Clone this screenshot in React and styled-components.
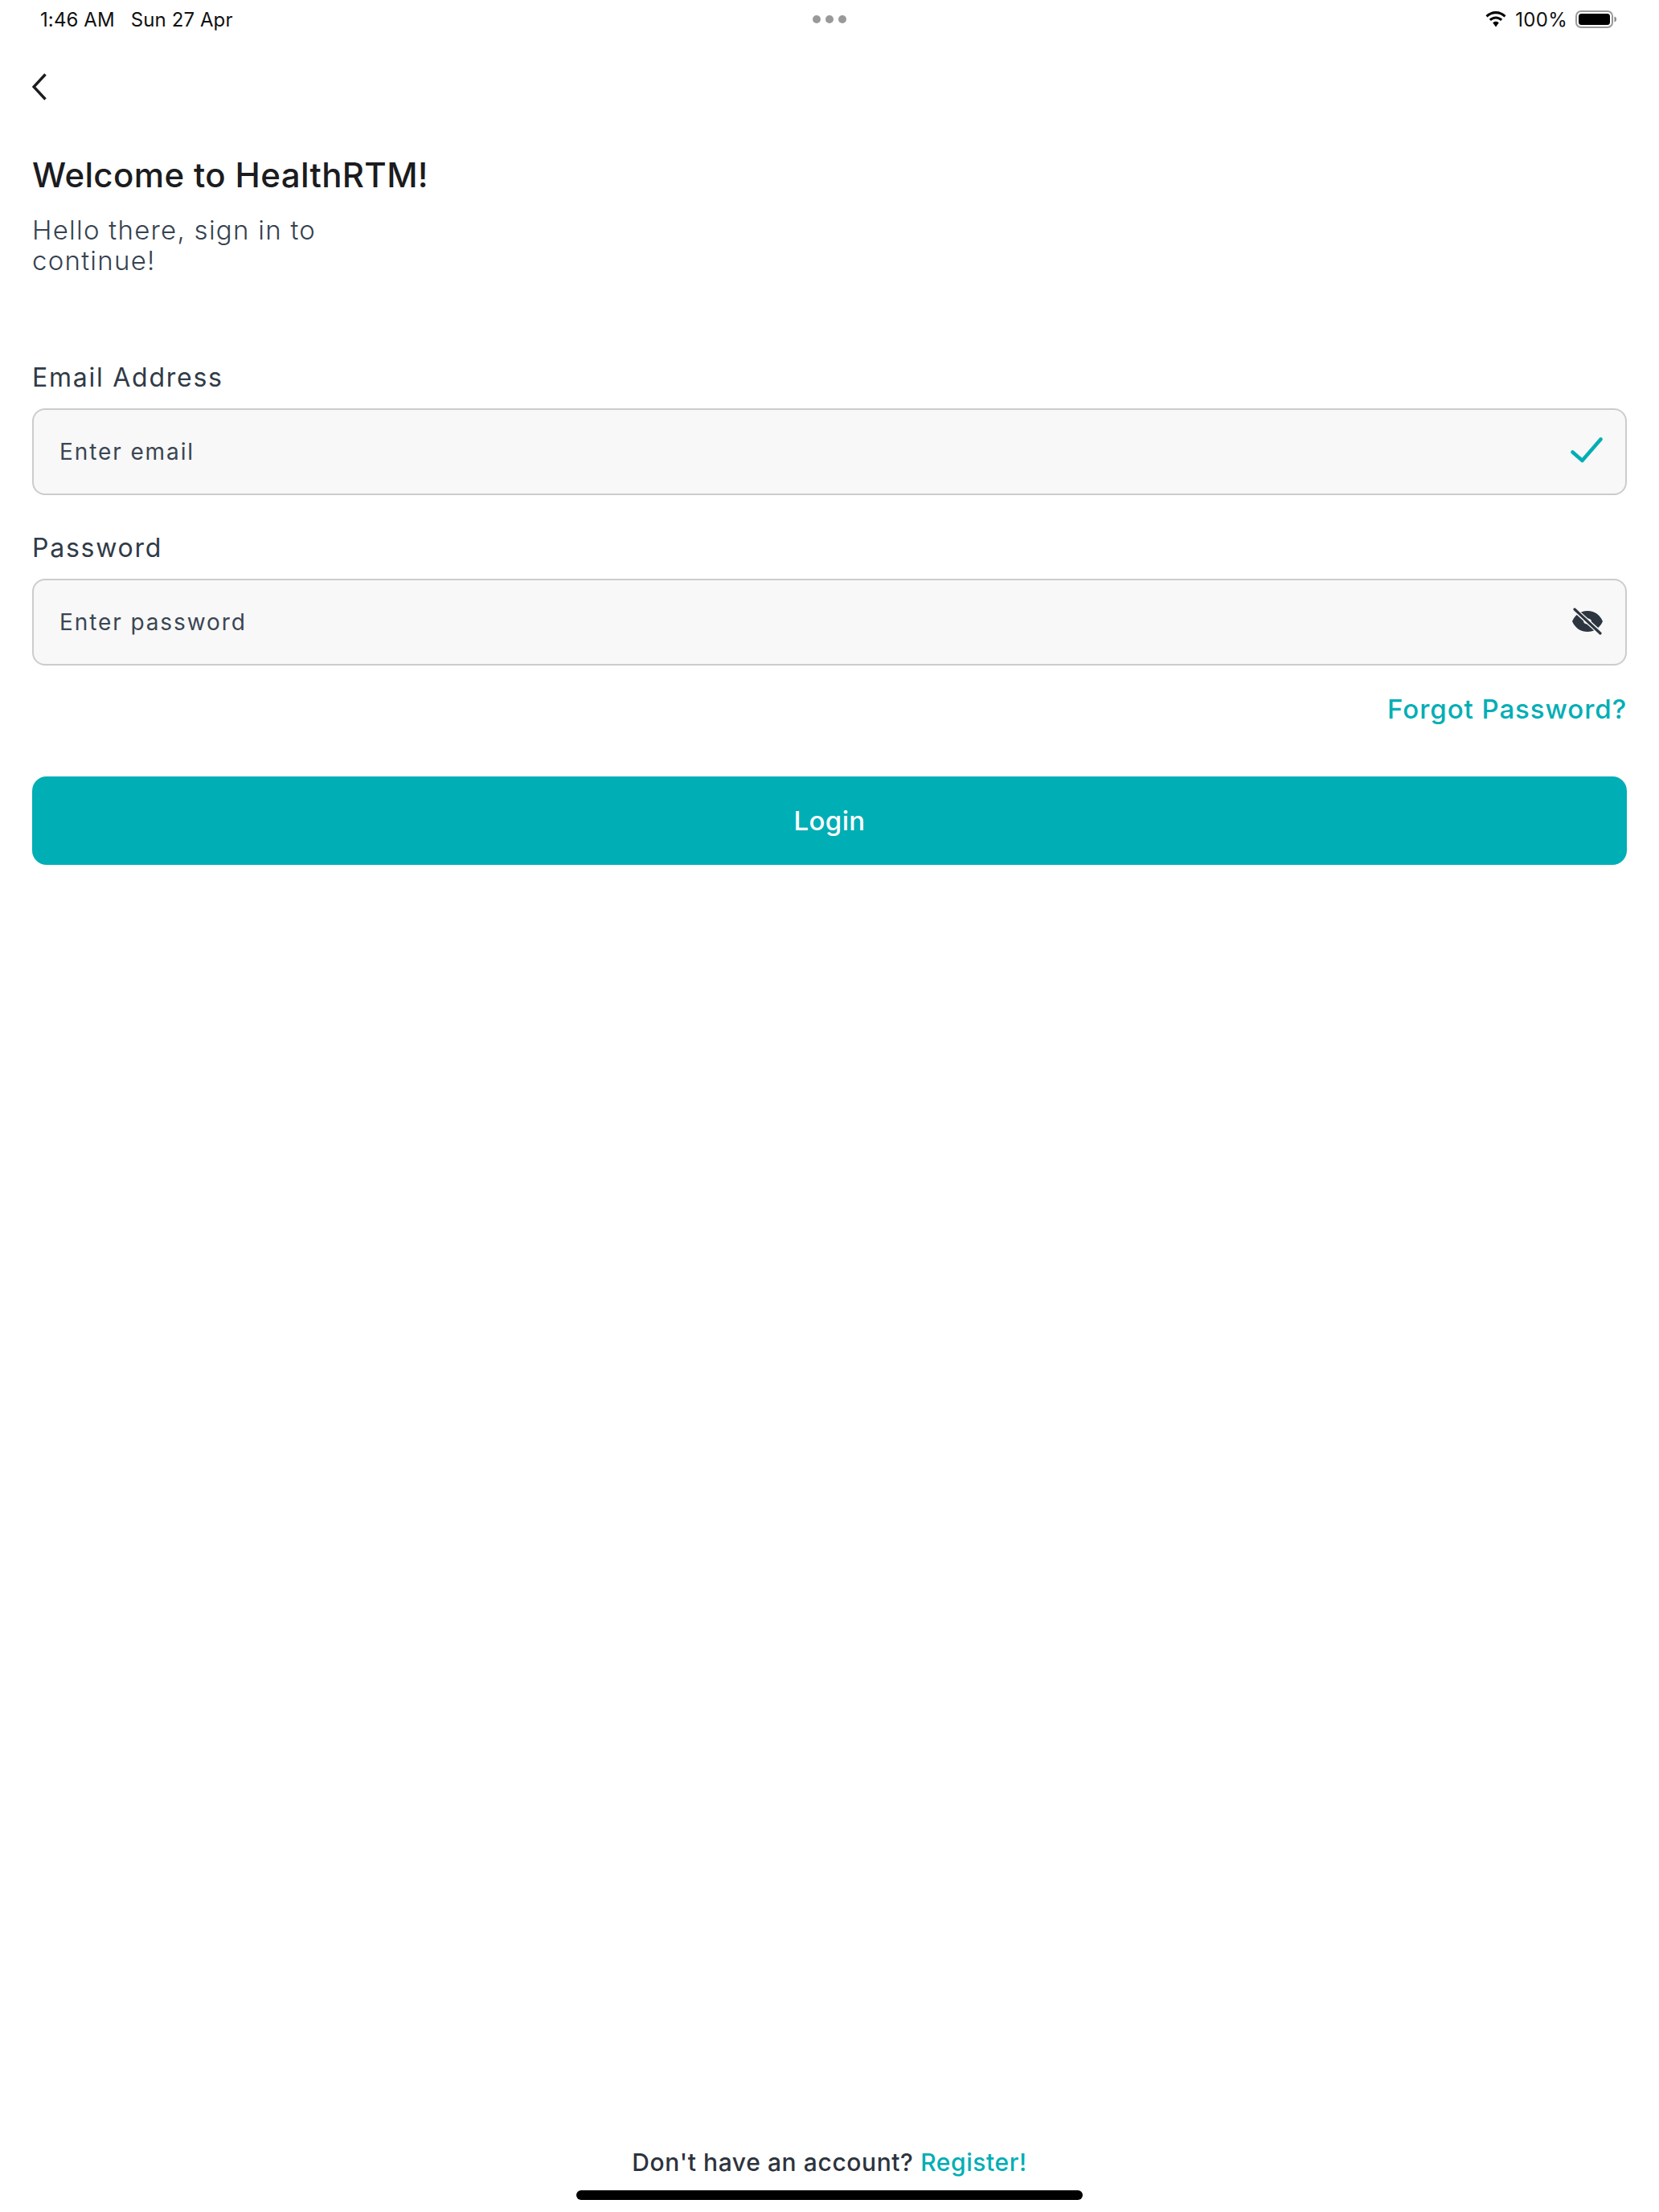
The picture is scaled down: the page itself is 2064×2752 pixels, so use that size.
import React from 'react';
import styled, { createGlobalStyle } from 'styled-components';

const GlobalStyle = createGlobalStyle`
    html, body {
        margin: 0;
        padding: 0;
        background: #fff;
    }
    * {
        box-sizing: border-box;
    }
`;

const Page = styled.div`
    width: 2064px;
    height: 2752px;
    position: relative;
    display: flex;
    flex-direction: column;
    font-family: Inter, "Liberation Sans", sans-serif;
    background: #fff;
`;

const StatusBar = styled.div`
    height: 48px;
    padding: 0 50px;
    display: grid;
    grid-template-columns: 1fr auto 1fr;
    align-items: center;
    color: #111;
    font-size: 24px;
`;

const StatusLeft = styled.div`
    display: flex;
    gap: 20px;
    letter-spacing: 0.1px;
`;

const Dots = styled.div`
    display: flex;
    gap: 6px;
    i {
        width: 10px;
        height: 10px;
        border-radius: 50%;
        background: #999;
    }
`;

const StatusRight = styled.div`
    padding-right: 2px;
    display: flex;
    justify-content: flex-end;
    align-items: center;
    gap: 10px;
    letter-spacing: 0.3px;
`;

const Content = styled.main`
    padding: 0 40px;
    display: flex;
    flex-direction: column;
`;

const BackButton = styled.button`
    width: 24px;
    height: 40px;
    margin-top: 40px;
    padding: 0;
    border: 0;
    background: none;
    display: flex;
    align-items: center;
`;

const Title = styled.h1`
    margin: 65px 0 0;
    font-size: 42px;
    line-height: 50px;
    font-weight: 500;
    color: #1b1c20;
    letter-spacing: 0.37px;
`;

const Subtitle = styled.p`
    margin: 24px 0 0;
    max-width: 400px;
    font-size: 33px;
    line-height: 38px;
    font-weight: 300;
    color: #36424f;
    letter-spacing: 1.26px;
`;

const Label = styled.label`
    display: block;
    margin-top: ${(p) => p.$top}px;
    font-size: 32px;
    line-height: 40px;
    font-weight: 400;
    color: #303b47;
    letter-spacing: 1.75px;
`;

const Field = styled.div`
    margin-top: 18px;
    height: 108px;
    padding: 0 28px 0 32px;
    border: 2px solid #cccccc;
    border-radius: 16px;
    background: #f8f8f8;
    display: flex;
    align-items: center;
    justify-content: space-between;
`;

const Placeholder = styled.span`
    font-size: 28px;
    font-weight: 400;
    color: #3a4653;
    letter-spacing: 1.9px;
`;

const ForgotRow = styled.div`
    margin-top: 34px;
    display: flex;
    justify-content: flex-end;
`;

const TealLink = styled.a`
    color: #00aeb5;
    font-weight: 500;
`;

const ForgotLink = styled(TealLink)`
    font-size: 33px;
    line-height: 40px;
    letter-spacing: 0.95px;
`;

const LoginButton = styled.button`
    margin-top: 64px;
    height: 110px;
    border: 0;
    border-radius: 18px;
    background: #00aeb5;
    color: #fff;
    font-family: inherit;
    font-size: 33px;
    font-weight: 500;
    letter-spacing: 0.4px;
`;

const Footer = styled.footer`
    margin-top: auto;
    padding-bottom: 15px;
    display: flex;
    flex-direction: column;
    align-items: center;
`;

const FooterText = styled.div`
    font-size: 30px;
    line-height: 40px;
    font-weight: 500;
    color: #2c333d;
    letter-spacing: 0.6px;
`;

const HomeBar = styled.div`
    margin-top: 15px;
    width: 630px;
    height: 12px;
    border-radius: 6px;
    background: #000;
`;

const CheckSvg = styled.svg`
    margin-bottom: 5px;
`;

const EyeSvg = styled.svg`
    margin-right: -1px;
    margin-bottom: 3px;
`;

const Wifi = () => (
    <svg width="28" height="20" viewBox="0 0 28 20">
        <path d="M14 3.2c4 0 7.7 1.6 10.5 4.2l2-2.1C23.100 2 18.800 0 14 0S4.900 2 1.500 5.300l2 2.100C6.300 4.800 10 3.200 14 3.200z" fill="#000" />
        <path d="M14 9.500c2.300 0 4.400.9 6.100 2.400l2.100-2.100C20 7.700 17.100 6.400 14 6.400s-6 1.300-8.200 3.400l2.100 2.100c1.700-1.500 3.800-2.400 6.100-2.400z" fill="#000" />
        <path d="M14 12.800c-1.500 0-2.800.6-3.800 1.500L14 19.500l3.800-5.200c-1-.9-2.300-1.500-3.800-1.500z" fill="#000" />
    </svg>
);

const Battery = () => (
    <svg width="52" height="24" viewBox="0 0 52 24">
        <rect x="1" y="2" width="45" height="20" rx="6" fill="none" stroke="#999" strokeWidth="2" />
        <rect x="4" y="5" width="39" height="14" rx="3.500" fill="#000" />
        <path d="M48.500 8.500c1.600.5 2.500 1.800 2.500 3.500s-.9 3-2.500 3.500z" fill="#888" />
    </svg>
);

const BackIcon = () => (
    <svg width="18" height="34" viewBox="0 0 18 34">
        <path d="M16.500 1.500 2 17l14.500 15.500" fill="none" stroke="#1b1c20" strokeWidth="3.400" />
    </svg>
);

const CheckIcon = () => (
    <CheckSvg width="40" height="32" viewBox="0 0 40 32">
        <path d="M2.500 18.500 14.500 29 37.500 2.500" fill="none" stroke="#00aeb5" strokeWidth="4.500" strokeLinecap="round" strokeLinejoin="round" />
    </CheckSvg>
);

const EyeOffIcon = () => (
    <EyeSvg width="40" height="34" viewBox="0 0 40 34">
        <path d="M1 17C5 8 12 4 20 4s15 4 19 13c-4 9-11 13-19 13S5 26 1 17z" fill="#2d3640" />
        <ellipse cx="20" cy="17" rx="5" ry="3.500" fill="#f8f8f8" />
        <path d="M3 1.500 37 32.500" stroke="#f8f8f8" strokeWidth="6" />
        <path d="M4 2 36 32" stroke="#2d3640" strokeWidth="3.200" strokeLinecap="round" />
    </EyeSvg>
);

export default function App() {
    return (
        <>
            <GlobalStyle />
            <Page>
                <StatusBar>
                    <StatusLeft>
                        <span>1:46 AM</span>
                        <span>Sun 27 Apr</span>
                    </StatusLeft>
                    <Dots>
                        <i />
                        <i />
                        <i />
                    </Dots>
                    <StatusRight>
                        <Wifi />
                        <span>100%</span>
                        <Battery />
                    </StatusRight>
                </StatusBar>
                <Content>
                    <BackButton aria-label="Back">
                        <BackIcon />
                    </BackButton>
                    <Title>Welcome to HealthRTM!</Title>
                    <Subtitle>Hello there, sign in to continue!</Subtitle>
                    <Label $top={107}>Email Address</Label>
                    <Field>
                        <Placeholder>Enter email</Placeholder>
                        <CheckIcon />
                    </Field>
                    <Label $top={46}>Password</Label>
                    <Field>
                        <Placeholder>Enter password</Placeholder>
                        <EyeOffIcon />
                    </Field>
                    <ForgotRow>
                        <ForgotLink>Forgot Password?</ForgotLink>
                    </ForgotRow>
                    <LoginButton>Login</LoginButton>
                </Content>
                <Footer>
                    <FooterText>
                        Don't have an account? <TealLink>Register!</TealLink>
                    </FooterText>
                    <HomeBar />
                </Footer>
            </Page>
        </>
    );
}
